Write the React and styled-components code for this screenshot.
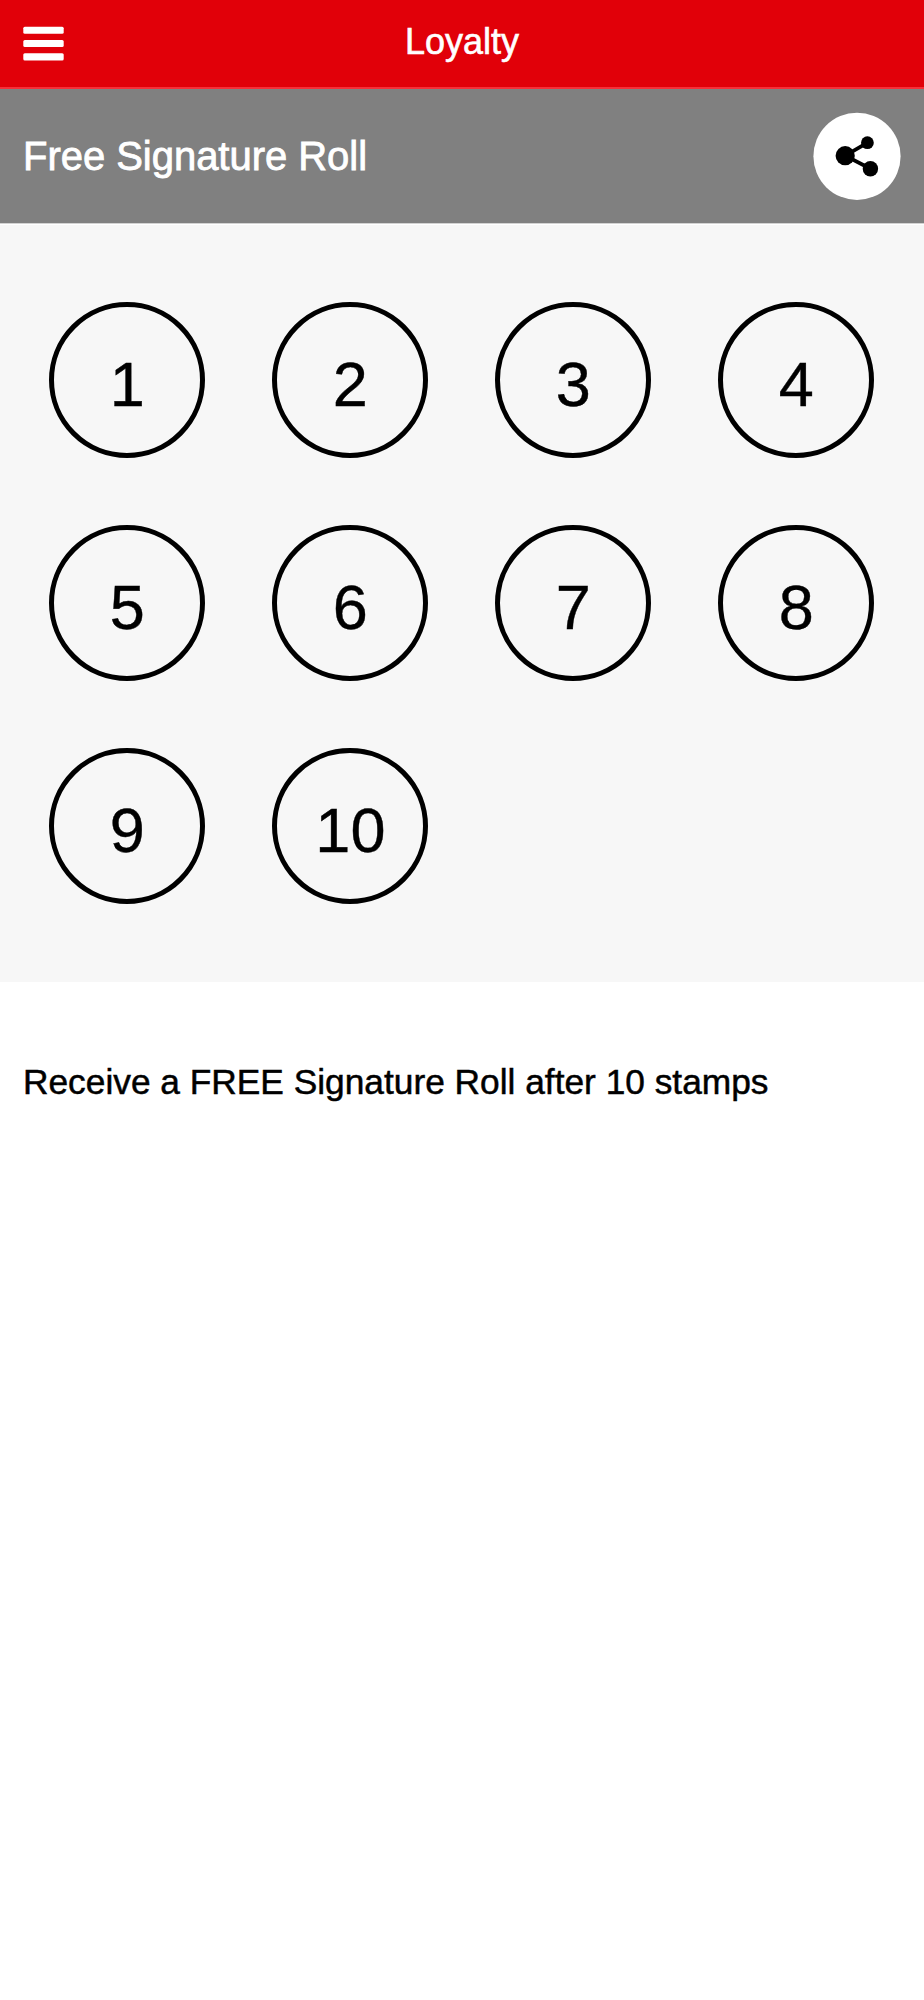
import React from "react";
import styled, { createGlobalStyle } from "styled-components";

const GlobalStyle = createGlobalStyle`
  * {
    box-sizing: border-box;
  }
  body {
    margin: 0;
    background: #fff;
    color: #000;
    font-family: "Liberation Sans", Arial, sans-serif;
  }
`;
const Page = styled.div`
  min-height: 2000px;
`;
const TopBar = styled.header`
  display: grid;
  grid-template-columns: 86px 1fr 86px;
  height: 89px;
  background: #e10009;
  border-bottom: 2px solid #f73039;
  color: #fff;
`;
const MenuButton = styled.button`
  display: flex;
  padding: 26px 0 0 23px;
  border: 0;
  background: none;
`;
const Title = styled.h1`
  margin: 0;
  text-align: center;
  font-size: 36px;
  font-weight: 400;
  line-height: 83px;
  -webkit-text-stroke: 0.6px #fff;
`;
const CardHeader = styled.div`
  display: flex;
  align-items: center;
  justify-content: space-between;
  height: 135px;
  padding: 0 23px;
  background: #808080;
  border-bottom: 1px solid #d2d2d2;
  color: #fff;
`;
const CardName = styled.h2`
  margin: 0;
  font-size: 40px;
  font-weight: 400;
  letter-spacing: -0.03px;
  -webkit-text-stroke: 0.8px #fff;
`;
const ShareButton = styled.button`
  width: 88px;
  height: 88px;
  padding: 0;
  border: 0;
  background: none;
`;
const Stamps = styled.div`
  display: grid;
  grid-template-columns: repeat(4, 156px);
  gap: 67px;
  height: 758px;
  padding: 76.5px 49.4px;
  align-content: start;
  border-top: 1px solid #fff;
  background: #f7f7f7;
`;
const Stamp = styled.div`
  display: flex;
  align-items: center;
  justify-content: center;
  width: 156px;
  height: 156px;
  padding-top: 8px;
  border: 5px solid #000;
  border-radius: 50%;
  font-size: 63px;
  -webkit-text-stroke: 0.4px #000;
`;
const Description = styled.p`
  margin: 0;
  padding: 80px 23px;
  font-size: 35.3px;
  line-height: 40px;
  -webkit-text-stroke: 0.5px #000;
`;

const stamps = [1, 2, 3, 4, 5, 6, 7, 8, 9, 10];

const App = () => {
  return (
    <Page>
      <GlobalStyle />
      <TopBar>
        <MenuButton aria-label="Menu">
          <svg width="41" height="36" viewBox="0 0 41 36" fill="#fff">
            <rect x="0.3" y="0.7" width="40.4" height="7.1" rx="1.5" />
            <rect x="0.3" y="14" width="40.4" height="7.1" rx="1.5" />
            <rect x="0.3" y="27.3" width="40.4" height="7.1" rx="1.5" />
          </svg>
        </MenuButton>
        <Title>Loyalty</Title>
      </TopBar>
      <CardHeader>
        <CardName>Free Signature Roll</CardName>
        <ShareButton aria-label="Share">
          <svg width="88" height="88" viewBox="0 0 88 88">
            <circle cx="44" cy="44.3" r="43.6" fill="#fff" />
            <path
              d="M54.2 30.8L32.2 43.7L57.5 56.8"
              fill="none"
              stroke="#000"
              strokeWidth="3.8"
            />
            <circle cx="54.4" cy="30.7" r="6.4" />
            <circle cx="32.2" cy="43.7" r="9.6" />
            <circle cx="57.4" cy="56.7" r="7.7" />
          </svg>
        </ShareButton>
      </CardHeader>
      <Stamps>
        {stamps.map((n) => (
          <Stamp key={n}>{n}</Stamp>
        ))}
      </Stamps>
      <Description>Receive a FREE Signature Roll after 10 stamps</Description>
    </Page>
  );
};
export default App;
